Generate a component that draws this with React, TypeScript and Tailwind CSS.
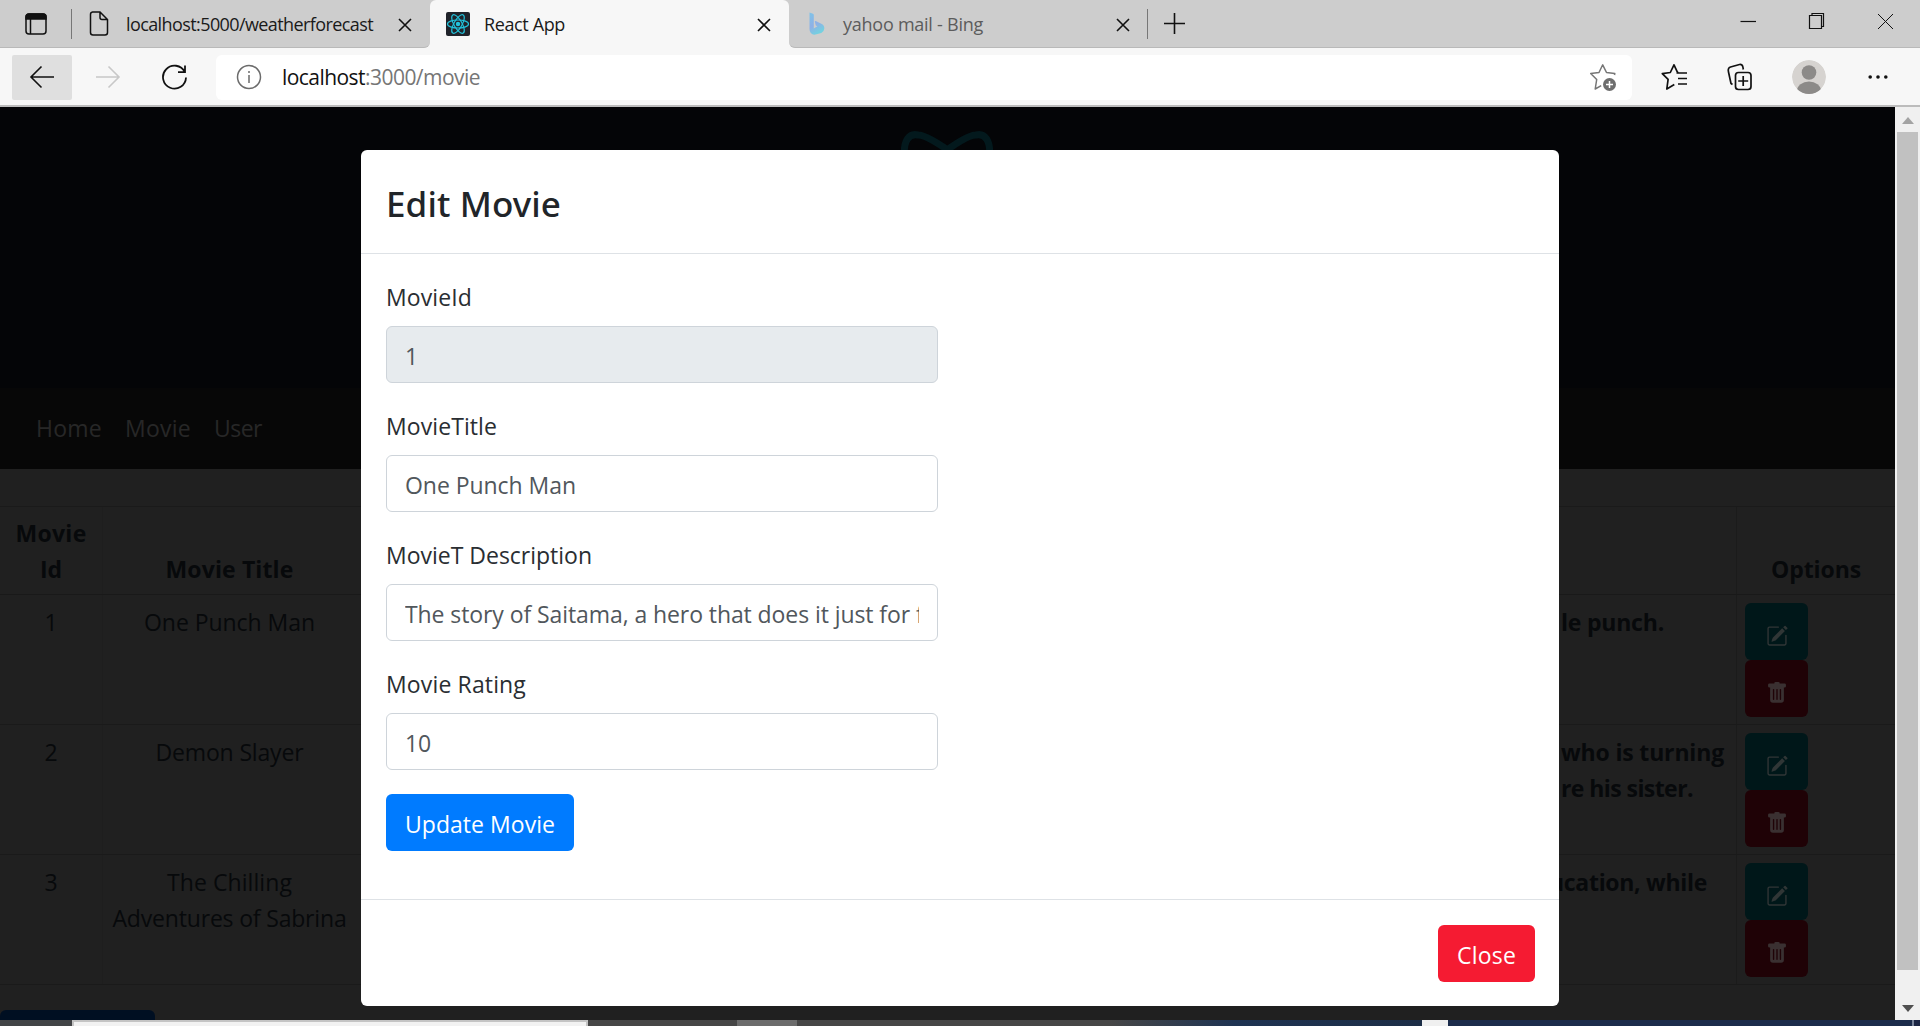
import { useLayoutEffect, useRef, useState } from "react";
import type { ReactNode } from "react";
import { BsPencilSquare, BsTrashFill } from "react-icons/bs";

/** One line of text whose tracking is adjusted so it occupies `w` pixels. */
function Fit({ children, w, className = "translate-y-px" }: { children: string; w: number; className?: string }) {
  const ref = useRef<HTMLSpanElement>(null);
  const [spacing, setSpacing] = useState(0);
  useLayoutEffect(() => {
    const el = ref.current;
    if (el) setSpacing((w - el.getBoundingClientRect().width) / children.length);
  }, [w, children]);
  return (
    <span ref={ref} className={`inline-block whitespace-pre ${className}`} style={{ letterSpacing: `${spacing}px` }}>
      {children}
    </span>
  );
}

function CloseX() {
  return (
    <svg width="14" height="14" viewBox="0 0 14 14" stroke="#111" strokeWidth="1.6" fill="none">
      <path d="M1 1L13 13M13 1L1 13" />
    </svg>
  );
}

function ReactMark() {
  return (
    <svg width="24" height="24" viewBox="0 0 24 24" fill="none" stroke="#22c3dc" strokeWidth="1.2">
      <rect width="24" height="24" rx="2" fill="#20232a" stroke="none" />
      <ellipse cx="12" cy="12" rx="10.5" ry="4" />
      <ellipse cx="12" cy="12" rx="10.5" ry="4" transform="rotate(60 12 12)" />
      <ellipse cx="12" cy="12" rx="10.5" ry="4" transform="rotate(120 12 12)" />
      <circle cx="12" cy="12" r="1.6" fill="#22c3dc" />
    </svg>
  );
}

function TabStrip() {
  return (
    <div className="flex h-12 bg-[#f7f7f7] text-lg leading-6 text-[#1a1a1a]">
      <div className="flex w-[430px] items-center rounded-br-md border-b border-[#b9b9b9] bg-[#cdcdcd] pl-[25px]">
        <svg width="22" height="22" viewBox="0 0 22 22" fill="none" stroke="#111" strokeWidth="1.5">
          <rect x="1" y="1" width="20" height="20" rx="3" />
          <path d="M1 6V4a3 3 0 0 1 3-3h14a3 3 0 0 1 3 3v2z" fill="#111" />
          <path d="M5.5 6v15" />
        </svg>
        <div className="ml-6 h-[30px] w-px bg-[#777]" />
        <svg className="ml-[17px]" width="20" height="25" viewBox="0 0 20 25" fill="none" stroke="#111" strokeWidth="1.5">
          <path d="M3.5 1H11l7.500 7.500V21.500a2.500 2.500 0 0 1-2.500 2.500h-12A2.500 2.500 0 0 1 1.500 21.500V3.500A2.500 2.500 0 0 1 3.500 1zM11 1v5.500a2 2 0 0 0 2 2h5.500" />
        </svg>
        <Fit w={247} className="ml-[17px]">localhost:5000/weatherforecast</Fit>
        <div className="ml-[25px] mt-0.5"><CloseX /></div>
      </div>
      <div className="w-[359px] bg-linear-to-b from-[#cdcdcd] from-50% to-[#f7f7f7] to-50%">
        <div className="flex h-full items-center rounded-t-md bg-[#f7f7f7] pl-4">
          <ReactMark />
          <Fit w={81} className="ml-3.5">React App</Fit>
          <div className="ml-auto mr-[18px] mt-0.5"><CloseX /></div>
        </div>
      </div>
      <div className="flex flex-1 items-center rounded-bl-md border-b border-[#b9b9b9] bg-[#cdcdcd] pl-5 text-[#5c5c5c]">
        <svg width="16" height="23" viewBox="0 0 16 23">
          <defs>
            <linearGradient id="bing" x1="0" y1="0" x2="0.4" y2="1">
              <stop offset="0" stopColor="#7fc4e8" />
              <stop offset="0.6" stopColor="#8fb0e6" />
              <stop offset="1" stopColor="#74d0e0" />
            </linearGradient>
          </defs>
          <path d="M0.500 0.500L4 1.700q.8.300.8 1.200V16.500l3.600-2.200-1.600-.9-1-3.600q0-1 1-.7l5.500 2.600q3.200 1.500 3 4.800t-3 4.400L7.500 22.300q-3.500 1.300-5.700-1.200Q.5 19.500.5 17z" fill="url(#bing)" />
        </svg>
        <Fit w={140} className="ml-[18px]">yahoo mail - Bing</Fit>
        <div className="ml-[133px] mt-0.5"><CloseX /></div>
        <div className="ml-[17px] h-[30px] w-px bg-[#777]" />
        <svg className="ml-4" width="21" height="21" viewBox="0 0 21 21" stroke="#111" strokeWidth="1.6">
          <path d="M0 10.500H21M10.500 0V21" />
        </svg>
        <svg className="mb-[5px] ml-auto mr-[26px]" width="155" height="18" viewBox="0 0 155 18" fill="none" stroke="#111">
          <path d="M1.500 9.500H17" strokeWidth="1.200" />
          <path d="M70.500 3.500h12v13h-12zM73 3.500V1.500h11.500v13H82.500" strokeWidth="1.200" />
          <path d="M139 2l15 15M154 2L139 17" />
        </svg>
      </div>
    </div>
  );
}

function AddressBar() {
  return (
    <div className="flex h-[59px] items-center border-b-2 border-[#bcbcbc] bg-[#f7f7f7] pb-[3px] pl-3 pt-1">
      <div className="flex h-[45px] w-[60px] items-center justify-center rounded-xs bg-[#dfdfdf]">
        <svg width="26" height="24" viewBox="0 0 26 24" fill="none" stroke="#111" strokeWidth="1.6">
          <path d="M25 12H2M12.500 1.500L2 12 12.500 22.500" />
        </svg>
      </div>
      <svg className="ml-[23px]" width="26" height="24" viewBox="0 0 26 24" fill="none" stroke="#c8c8c8" strokeWidth="1.6">
        <path d="M1 12H24M13.500 1.500L24 12 13.500 22.500" />
      </svg>
      <svg className="ml-10" width="27" height="27" viewBox="0 0 27 27" fill="none" stroke="#111" strokeWidth="1.800">
        <path d="M23.800 8A11.500 11.500 0 1 0 25 13.500M24 1.500V8.200H17" />
      </svg>
      <div className="ml-7 flex h-[45px] w-[1416px] items-center rounded-md bg-white pl-5 pr-[15px] text-[21px] leading-7">
        <svg width="26" height="26" viewBox="0 0 26 26" fill="none" stroke="#6b6b6b" strokeWidth="1.500">
          <circle cx="13" cy="13" r="11.500" />
          <path d="M13 11v8M13 7v2" />
        </svg>
        <Fit w={83} className="ml-5 text-[#111]">localhost</Fit>
        <Fit w={115} className="text-[#767676]">:3000/movie</Fit>
        <svg className="ml-auto" width="28" height="28" viewBox="0 0 28 28" fill="none" stroke="#767676" strokeWidth="1.500" strokeLinejoin="round">
          <path d="M25.500 12l.300-1.500-8.300-1L13.700 1.800 10 9.500l-8.300 1 6 6L6.200 26l6-3.300" />
          <circle cx="20.500" cy="21.500" r="6.500" fill="#6e6e6e" stroke="none" />
          <path d="M20.500 18v7M17 21.500h7" stroke="#fff" />
        </svg>
      </div>
      <svg className="ml-[29px]" width="27" height="28" viewBox="0 0 27 28" fill="none" stroke="#111" strokeWidth="1.700" strokeLinejoin="round">
        <path d="M17.500 9.500l-1-.2L13 1.800 9.300 9.500l-8 1.200 5.800 5.700L5.800 26l7.500-4.500M15.500 10H26M17 15.500h9M17 21h9" />
      </svg>
      <svg className="ml-[38px]" width="27" height="28" viewBox="0 0 27 28" fill="none" stroke="#111" strokeWidth="1.700">
        <rect x="9.500" y="9.500" width="15.500" height="17" rx="3" />
        <path d="M17.200 13v10M12.200 18h10" />
        <path d="M6.500 21.500L5 20.500 2.500 9Q1.500 5 4.500 4L13.500 1.500q3-.5 3.500 3l.3 2" />
      </svg>
      <svg className="ml-[39px]" width="34" height="34" viewBox="0 0 34 34">
        <clipPath id="face"><circle cx="17" cy="17" r="17" /></clipPath>
        <g clipPath="url(#face)">
          <circle cx="17" cy="17" r="17" fill="#d6d3d0" />
          <circle cx="17" cy="12.500" r="7.300" fill="#8c8a88" />
          <ellipse cx="17" cy="31" rx="12" ry="9.500" fill="#8c8a88" />
        </g>
      </svg>
      <svg className="ml-[42px]" width="20" height="6" viewBox="0 0 20 6" fill="#111">
        <circle cx="2.200" cy="3" r="1.800" /><circle cx="10" cy="3" r="1.800" /><circle cx="17.800" cy="3" r="1.800" />
      </svg>
    </div>
  );
}

type Line = [string, number];

function Row({ id, title, text }: { id: string; title: Line[]; text: Line[] }) {
  return (
    <div className="grid h-[130px] grid-cols-[103px_253px_1381px_1fr] border-b border-[#1a1a1a]">
      <div className="border-r border-[#1e1e1e] pt-2 text-center"><Fit w={13}>{id}</Fit></div>
      <div className="pt-2 text-center">
        {title.map(([t, w]) => <div key={t}><Fit w={w}>{t}</Fit></div>)}
      </div>
      <div className="flex flex-col items-end border-r border-[#1b1b1b] pt-2 font-bold">
        {text.map(([t, w]) => (
          <div key={t} className="flex w-[175px] justify-start">
            <Fit w={w} className={t.startsWith("u") ? "-ml-3 translate-y-px" : "translate-y-px"}>{t}</Fit>
          </div>
        ))}
      </div>
      <div className="flex flex-col items-start pl-2 pt-2">
        <div className="flex h-[57px] w-[63px] items-center justify-center rounded-md bg-[#001719] pt-2 text-[#303636]">
          <BsPencilSquare size={22} />
        </div>
        <div className="flex h-[57px] w-[63px] items-center justify-center rounded-md bg-[#1f0206] pt-2 text-[#3a3031]">
          <BsTrashFill size={22} />
        </div>
      </div>
    </div>
  );
}

function Page() {
  return (
    <div className="h-full flex-1 bg-[#202020] text-[23px] leading-9 text-[#07090b]">
      <div className="flex h-[281px] justify-center bg-[#040507]">
        <svg className="mt-5" width="100" height="60" viewBox="0 0 100 60" fill="none" stroke="#03191d" strokeWidth="7">
          <path d="M7 34C4 12 12 6 20 8 34 8 88 50 92 60M91 34C94 12 86 6 78 8 64 8 12 50 8 60" />
        </svg>
      </div>
      <div className="flex h-[81px] gap-[23px] bg-[#070707] pl-9 pt-[21px] text-[#272727]">
        <Fit w={66}>Home</Fit>
        <Fit w={66}>Movie</Fit>
        <Fit w={48}>User</Fit>
      </div>
      <div className="mt-[37px] border-t border-[#1a1a1a]">
        <div className="grid h-[88px] grid-cols-[103px_253px_1381px_1fr] items-stretch border-b border-[#191919] text-center font-bold">
          <div className="flex flex-col items-center border-r border-[#1e1e1e] pt-[7px]">
            <Fit w={71}>Movie</Fit>
            <Fit w={22}>Id</Fit>
          </div>
          <div className="flex items-end justify-center pb-2"><Fit w={128}>Movie Title</Fit></div>
          <div className="border-r border-[#1b1b1b]" />
          <div className="flex items-end justify-center pb-2"><Fit w={90}>Options</Fit></div>
        </div>
        <Row id="1" title={[["One Punch Man", 171]]} text={[["le punch.", 103]]} />
        <Row id="2" title={[["Demon Slayer", 148]]} text={[["who is turning", 163], ["re his sister.", 132]]} />
        <Row id="3" title={[["The Chilling", 125], ["Adventures of Sabrina", 234]]} text={[["ucation, while", 158]]} />
      </div>
      <div className="mt-[25px] h-2.5 w-[155px] rounded-t-md bg-[#000f22]" />
    </div>
  );
}

function Field({ label, lw, disabled, children }: { label: string; lw: number; disabled?: boolean; children: ReactNode }) {
  return (
    <div className="mb-6 w-[552px]">
      <div className="mb-3 h-9"><Fit w={lw}>{label}</Fit></div>
      <div className={`h-[57px] rounded-md border border-[#ced4da] px-[18px] pt-2.5 text-[#51575c] ${disabled ? "bg-[#e7ebee]" : "bg-white"}`}>
        <div className="h-9 overflow-hidden whitespace-nowrap">{children}</div>
      </div>
    </div>
  );
}

function Modal() {
  return (
    <div className="absolute left-[361px] top-[43px] h-[856px] w-[1198px] rounded-md bg-white text-[23px] leading-9 text-[#2a2e32]">
      <div className="h-[104px] border-b border-[#dee2e6] pl-[25px] pt-[25px] font-['Noto_Sans',sans-serif] text-[35px] font-medium leading-[54px] text-[#212529]">
        <Fit w={175} className="translate-y-0.5">Edit Movie</Fit>
      </div>
      <div className="h-[645px] pl-[25px] pt-6">
        <Field label="MovieId" lw={86} disabled><Fit w={13}>1</Fit></Field>
        <Field label="MovieTitle" lw={111}><Fit w={171}>One Punch Man</Fit></Field>
        <Field label="MovieT Description" lw={206}>
          <Fit w={505}>The story of Saitama, a hero that does it just for</Fit>
          <Fit w={42}> fun</Fit>
        </Field>
        <Field label="Movie Rating" lw={140}><Fit w={26}>10</Fit></Field>
        <button className="block h-[57px] w-[188px] rounded-md bg-[#007bff] text-white"><Fit w={150}>Update Movie</Fit></button>
      </div>
      <div className="flex justify-end border-t border-[#dee2e6] pr-6 pt-[25px]">
        <button className="h-[57px] w-[97px] rounded-md bg-[#f51b32] text-white"><Fit w={59}>Close</Fit></button>
      </div>
    </div>
  );
}

function Scrollbar() {
  return (
    <div className="flex w-[25px] flex-col items-center bg-[#f0f0f0]">
      <svg className="mt-2.5" width="12" height="7" viewBox="0 0 12 7" fill="#a3a3a3"><path d="M0 7L6 0l6 7z" /></svg>
      <div className="mt-2 h-[838px] w-[21px] bg-[#c1c1c1]" />
      <svg className="mt-[35px]" width="12" height="7" viewBox="0 0 12 7" fill="#505050"><path d="M0 0L6 7l6-7z" /></svg>
    </div>
  );
}

function Taskbar() {
  return (
    <div className="flex h-1.5">
      <div className="w-[72px] bg-[#424446]" />
      <div className="w-[516px] border-x-2 border-t-2 border-[#c4c4c4] bg-[#f2f2f2]" />
      <div className="w-[149px] bg-[#464646]" />
      <div className="w-[60px] bg-[#6c6c6c]" />
      <div className="w-[625px] bg-linear-to-r from-[#464646] from-50% via-[#1e3352] via-70% to-[#1c2d46]" />
      <div className="w-[26px] bg-[#f0f0f0]" />
      <div className="flex-1 bg-[#1b2b4b]" />
      <div className="w-0.5 bg-[#77839a]" />
      <div className="w-1.5 bg-[#1b2544]" />
    </div>
  );
}

export default function App() {
  return (
    <div className="flex h-[1026px] w-[1920px] flex-col overflow-hidden bg-[#f7f7f7] font-['Open_Sans',sans-serif]">
      <TabStrip />
      <AddressBar />
      <div className="relative flex h-[913px] overflow-hidden">
        <Page />
        <Modal />
        <Scrollbar />
      </div>
      <Taskbar />
    </div>
  );
}
